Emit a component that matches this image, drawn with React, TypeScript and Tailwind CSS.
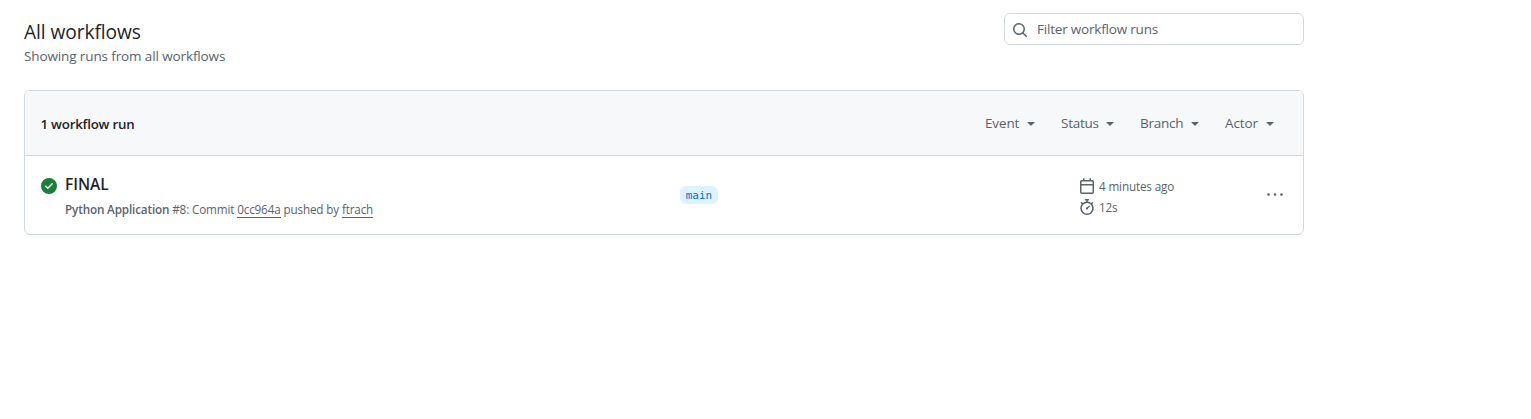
import React from "react";

type IconProps = { d: string; className?: string };

function Octicon({ d, className = "" }: IconProps) {
  return (
    <svg viewBox="0 0 16 16" width="16" height="16" fill="currentColor" aria-hidden="true" className={`shrink-0 ${className}`}>
      <path d={d} />
    </svg>
  );
}

const icons = {
  search:
    "M10.68 11.74a6 6 0 0 1-7.922-8.982 6 6 0 0 1 8.982 7.922l3.04 3.04a.749.749 0 0 1-.326 1.275.749.749 0 0 1-.734-.215ZM11.5 7a4.499 4.499 0 1 0-8.997 0A4.499 4.499 0 0 0 11.5 7Z",
  caret: "m4.427 7.427 3.396 3.396a.25.25 0 0 0 .354 0l3.396-3.396A.25.25 0 0 0 11.396 7H4.604a.25.25 0 0 0-.177.427Z",
  check:
    "M8 16A8 8 0 1 1 8 0a8 8 0 0 1 0 16Zm3.78-9.72a.751.751 0 0 0-.018-1.042.751.751 0 0 0-1.042-.018L6.75 9.19 5.28 7.72a.751.751 0 0 0-1.042.018.751.751 0 0 0-.018 1.042l2 2a.75.75 0 0 0 1.06 0Z",
  calendar:
    "M4.75 0a.75.75 0 0 1 .75.75V2h5V.75a.75.75 0 0 1 1.5 0V2h1.25c.966 0 1.75.784 1.75 1.75v10.5A1.75 1.75 0 0 1 13.25 16H2.75A1.75 1.75 0 0 1 1 14.25V3.75C1 2.784 1.784 2 2.75 2H4V.75A.75.75 0 0 1 4.75 0ZM2.5 7.5v6.75c0 .138.112.25.25.25h10.5a.25.25 0 0 0 .25-.25V7.5Zm10.75-4H2.75a.25.25 0 0 0-.25.25V6h11V3.75a.25.25 0 0 0-.25-.25Z",
  stopwatch:
    "M5.75.75A.75.75 0 0 1 6.5 0h3a.75.75 0 0 1 0 1.5h-.75v1l-.001.041a6.724 6.724 0 0 1 3.464 1.435l.007-.006.75-.75a.749.749 0 0 1 1.275.326.749.749 0 0 1-.215.734l-.75.75-.006.007a6.75 6.75 0 1 1-10.548 0L2.72 5.03l-.75-.75a.751.751 0 0 1 .018-1.042.751.751 0 0 1 1.042-.018l.75.75.007.006A6.72 6.72 0 0 1 7.25 2.541V1.5H6.5a.75.75 0 0 1-.75-.75ZM8 14.5a5.25 5.25 0 1 0-.001-10.501A5.25 5.25 0 0 0 8 14.5Zm.1-6.2 1.67-1.67a.7.7 0 1 1 .99.99L9.1 9.28A1.15 1.15 0 1 1 8.1 8.3Z",
  kebab:
    "M8 8.85a1.35 1.35 0 1 0 0-2.7 1.35 1.35 0 0 0 0 2.7ZM1.5 8.85a1.35 1.35 0 1 0 0-2.7 1.35 1.35 0 0 0 0 2.7Zm13 0a1.35 1.35 0 1 0 0-2.7 1.35 1.35 0 0 0 0 2.7Z",
};

const filters = [
  { label: "Event", width: "w-[76px]", text: "w-[34px] tracking-[-0.15px]" },
  { label: "Status", width: "w-[79px]", text: "w-[37px] tracking-[-0.25px]" },
  { label: "Branch", width: "w-[85px]", text: "w-[43px] tracking-[-0.25px]" },
  { label: "Actor", width: "w-[62px]", text: "w-[33px] tracking-[-0.1px]" },
];

export default function App() {
  return (
    <main className="min-h-[419px] bg-white pl-6 pt-[13px] font-['Open_Sans','Noto_Sans',sans-serif] text-[13.5px] text-[#59636e]">
      <div className="w-[1280px]">
        <header className="flex h-[77px] items-start justify-between">
          <div className="pt-1">
            <h1 className="text-[19.2px] leading-[30px] tracking-[-0.09px] text-[#1f2328]">All workflows</h1>
            <p className="-mt-px leading-[21px] tracking-[-0.12px]">Showing runs from all workflows</p>
          </div>
          <label className="flex h-8 w-[300px] items-center rounded-md border border-[#d1d9e0] pl-[7px]">
            <Octicon d={icons.search} className="mt-0.5" />
            <input
              aria-label="Filter workflow runs"
              placeholder="Filter workflow runs"
              className="ml-[9px] w-60 bg-transparent leading-5 tracking-[-0.2px] outline-none placeholder:text-[#59636e]"
            />
          </label>
        </header>

        <section className="overflow-hidden rounded-md border border-[#d1d9e0]">
          <div className="flex h-[65px] items-center justify-between border-b border-[#d1d9e0] bg-[#f6f8fa] pl-[15.5px] pr-4">
            <strong className="pt-[3px] text-[13.3px] font-semibold tracking-[-0.22px] text-[#1f2328]">1 workflow run</strong>
            <div className="flex">
              {filters.map((f) => (
                <button key={f.label} className={`flex items-center leading-5 ${f.width}`}>
                  <span className={`whitespace-nowrap text-left ${f.text}`}>{f.label}</span>
                  <Octicon d={icons.caret} className="ml-1" />
                </button>
              ))}
            </div>
          </div>

          <article className="flex h-[78px] pl-4">
            <Octicon d={icons.check} className="mt-[22px] text-[#1a7f37]" />
            <div className="ml-2 w-[615px] pt-4">
              <h2 className="text-[15.5px] font-semibold leading-6 tracking-[-0.05px] text-[#1f2328]">FINAL</h2>
              <p className="mt-1 text-[11.7px] leading-[18px] tracking-[-0.145px]">
                <b className="font-semibold">Python Application</b> #8: Commit{" "}
                <a className="border-b border-[#59636e]">0cc964a</a> pushed by{" "}
                <a className="border-b border-[#59636e]">ftrach</a>
              </p>
            </div>
            <div className="w-[399px] pt-[30px]">
              <span className="block h-[18px] w-[38px] rounded-md bg-[#ddf4ff] text-center font-['DejaVu_Sans_Mono',monospace] text-[11px] leading-[19px] text-[#0969da]">
                main
              </span>
            </div>
            <div className="flex w-[188px] flex-col gap-[5px] pt-[22px] text-[11.7px] leading-4 tracking-[-0.15px]">
              <div className="flex gap-1">
                <Octicon d={icons.calendar} />
                4 minutes ago
              </div>
              <div className="flex gap-1">
                <Octicon d={icons.stopwatch} />
                12s
              </div>
            </div>
            <Octicon d={icons.kebab} className="mt-[31px]" />
          </article>
        </section>
      </div>
    </main>
  );
}
